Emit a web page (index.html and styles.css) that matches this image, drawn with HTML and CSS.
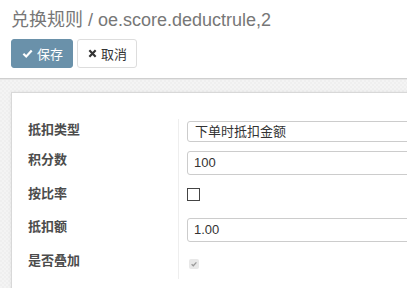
FILE: index.html
```html
<!DOCTYPE html>
<html lang="zh">
<head>
    <meta charset="UTF-8">
    <title>兑换规则</title>
    <link rel="stylesheet" href="styles.css">
</head>
<body>
    <div class="page">
        <!-- Cabecera con título y botones -->
        <div class="control-panel">
            <h1 class="breadcrumb">兑换规则 / oe.score.deductrule,2</h1>
            <div class="buttons">
                <button class="btn btn-primary">
                    <svg class="btn-icon" viewBox="0 0 12 12" width="11" height="11">
                        <path d="M1.5 6.2 L4.6 9.2 L10.6 2.8" fill="none" stroke="#fff" stroke-width="2.4"/>
                    </svg>
                    保存
                </button>
                <button class="btn btn-default">
                    <svg class="btn-icon" viewBox="0 0 10 10" width="9" height="9">
                        <path d="M1.5 1.5 L8.5 8.5 M8.5 1.5 L1.5 8.5" fill="none" stroke="#333" stroke-width="2.4"/>
                    </svg>
                    取消
                </button>
            </div>
        </div>

        <!-- Hoja del formulario -->
        <div class="form-area">
            <div class="sheet">
                <div class="form-group">
                    <div class="form-row row-1">
                        <div class="form-label">抵扣类型</div>
                        <div class="form-field">
                            <div class="field-input field-select">下单时抵扣金额</div>
                        </div>
                    </div>
                    <div class="form-row row-2">
                        <div class="form-label">积分数</div>
                        <div class="form-field">
                            <div class="field-input">100</div>
                        </div>
                    </div>
                    <div class="form-row row-3">
                        <div class="form-label">按比率</div>
                        <div class="form-field">
                            <span class="checkbox"></span>
                        </div>
                    </div>
                    <div class="form-row row-4">
                        <div class="form-label">抵扣额</div>
                        <div class="form-field">
                            <div class="field-input">1.00</div>
                        </div>
                    </div>
                    <div class="form-row row-5">
                        <div class="form-label">是否叠加</div>
                        <div class="form-field">
                            <span class="checkbox-disabled">
                                <svg viewBox="0 0 10 10" width="10" height="10">
                                    <path d="M2.6 5.2 L4.3 6.8 L7.4 3.4" fill="none" stroke="#9a9a9a" stroke-width="1.3"/>
                                </svg>
                            </span>
                        </div>
                    </div>
                </div>
            </div>
        </div>
    </div>
</body>
</html>
```

FILE: styles.css
```css
* {
    margin: 0;
    padding: 0;
    box-sizing: border-box;
}

body {
    font-family: "Liberation Sans", Arial, "Noto Sans CJK SC", sans-serif;
    color: #4c4c4c;
    background-color: #fff;
    overflow: hidden;
}

.page {
    width: 407px;
    height: 288px;
    overflow: hidden;
    display: flex;
    flex-direction: column;
}

/* Cabecera */
.control-panel {
    padding: 10px 11px 10px 11px;
    border-bottom: 1px solid #cfcfcf;
    background: #fff;
}

.breadcrumb {
    font-size: 18px;
    font-weight: normal;
    line-height: 20px;
    color: #777;
    white-space: nowrap;
    margin-bottom: 9px;
}

.buttons {
    display: flex;
    gap: 4px;
}

.btn {
    height: 29px;
    padding: 0 9px 0 10px;
    font-family: "Liberation Sans", Arial, "Noto Sans CJK SC", sans-serif;
    font-size: 13px;
    border-radius: 3px;
    display: flex;
    align-items: center;
    gap: 4px;
    cursor: pointer;
}

.btn-primary {
    width: 62px;
    background-color: #6a91aa;
    border: 1px solid #6a91aa;
    color: #fff;
}

.btn-default {
    width: 60px;
    background-color: #fff;
    border: 1px solid #ddd;
    color: #333;
}

.btn-icon {
    flex-shrink: 0;
}

/* Zona del formulario */
.form-area {
    flex: 1;
    background-color: #efefef;
    background-image: linear-gradient(45deg, #f4f4f4 25%, transparent 25%, transparent 75%, #f4f4f4 75%),
                      linear-gradient(45deg, #f4f4f4 25%, transparent 25%, transparent 75%, #f4f4f4 75%);
    background-size: 4px 4px;
    background-position: 0 0, 2px 2px;
    padding: 12px 0 0 11px;
    border-top: 1px solid #e6e6e6;
}

.sheet {
    background: #fff;
    width: 420px;
    height: 220px;
    border: 1px solid #d8d8d8;
    box-shadow: 0 0 3px rgba(0, 0, 0, 0.08);
    padding: 26px 0 0 16px;
}

.form-row {
    display: flex;
}

.row-1 { height: 30px; }
.row-2 { height: 34px; }
.row-3 { height: 33px; }
.row-4 { height: 34px; }
.row-5 { height: 29px; }

.form-label {
    width: 150px;
    flex-shrink: 0;
    font-size: 13px;
    font-weight: bold;
    line-height: 18px;
    padding-top: 2px;
    color: #4c4c4c;
}

.form-field {
    flex: 1;
    min-width: 0;
    border-left: 1px solid #eee;
    padding: 2px 0 0 8px;
}

.field-input {
    width: 260px;
    height: 24px;
    border: 1px solid #ccc;
    border-radius: 3px;
    font-size: 13px;
    line-height: 22px;
    color: #333;
    padding-left: 6px;
}

.field-select {
    height: 21px;
    line-height: 19px;
    padding-left: 7px;
}

.checkbox {
    display: block;
    width: 13px;
    height: 13px;
    margin-top: 3px;
    border: 1px solid #444;
    background: #fff;
}

.checkbox-disabled {
    display: block;
    width: 10px;
    height: 10px;
    margin: 7px 0 0 2px;
    background: #e8e8e8;
    border-radius: 2px;
}

.checkbox-disabled svg {
    display: block;
}
```
